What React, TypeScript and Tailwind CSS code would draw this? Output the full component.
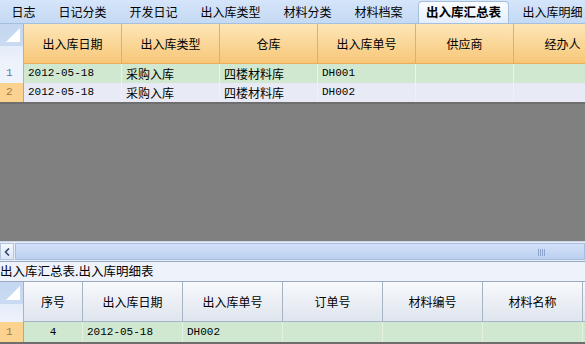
import React from 'react';

const cjk = "font-['Noto_Sans_CJK_SC',sans-serif]";
const mono = "font-['Liberation_Mono','Noto_Sans_CJK_SC',monospace]";

const tabs = ['日志', '日记分类', '开发日记', '出入库类型', '材料分类', '材料档案', '出入库汇总表', '出入库明细'];

const topCols = ['出入库日期', '出入库类型', '仓库', '出入库单号', '供应商', '经办人'];
const topRows = [
  { n: '1', cells: ['2012-05-18', '采购入库', '四楼材料库', 'DH001', '', ''], selected: false },
  { n: '2', cells: ['2012-05-18', '采购入库', '四楼材料库', 'DH002', '', ''], selected: true },
];

const bottomCols = [
  { t: '序号', w: 'w-[59px]' },
  { t: '出入库日期', w: 'w-[100px]' },
  { t: '出入库单号', w: 'w-[100px]' },
  { t: '订单号', w: 'w-[100px]' },
  { t: '材料编号', w: 'w-[100px]' },
  { t: '材料名称', w: 'w-[100px]' },
  { t: '', w: 'w-[40px]' },
];

const Corner = ({ h }: { h: string }) => (
  <div className={`relative w-[24px] shrink-0 ${h} bg-gradient-to-b from-[#d6e4f7] to-[#eef3fb] border-r border-[#9eb6ce]`}>
    <div className="absolute top-0 left-0 right-0 h-[22px] bg-[#b9cfec]/60" />
    <div className="absolute top-[4px] right-[3px] w-0 h-0 border-l-[14px] border-l-transparent border-b-[14px] border-b-[#ffffff]" />
  </div>
);

const isAscii = (s: string) => /^[\x00-\x7f]*$/.test(s);

export default function App() {
  return (
    <div className={`w-[585px] h-[344px] overflow-hidden bg-[#808080] flex flex-col text-[12px] text-black ${cjk}`}>
      {/* tab strip */}
      <div className="h-[24px] shrink-0 flex items-end bg-gradient-to-b from-[#d5e5fa] to-[#c4d9f3] border-b border-[#a6bfdc] overflow-hidden">
        {tabs.map((t) =>
          t === '出入库汇总表' ? (
            <div key={t} className="h-[22px] px-[7px] ml-[4px] mr-[2px] flex items-center rounded-t-[4px] bg-gradient-to-b from-[#fbfdff] to-[#e4eefb] border border-b-0 border-[#a6bfdc] font-bold text-[12.5px] whitespace-nowrap shrink-0">
              {t}
            </div>
          ) : (
            <div key={t} className="h-[22px] px-[11.5px] flex items-center text-[12px] whitespace-nowrap shrink-0">
              {t}
            </div>
          )
        )}
      </div>

      {/* master grid */}
      <div className="flex shrink-0">
        <Corner h="h-[40px]" />
        {topCols.map((c) => (
          <div key={c} className="w-[98px] shrink-0 h-[40px] flex items-center justify-center bg-gradient-to-b from-[#fde6b8] to-[#f7c777] border-r border-[#e9ad5c] border-b border-[#d9a352]">
            {c}
          </div>
        ))}
      </div>
      {topRows.map((r) => (
        <div key={r.n} className="flex shrink-0 h-[19px]">
          <div className={`w-[24px] shrink-0 pl-[6px] text-[11px] leading-[19px] border-r ${r.selected ? 'bg-[#fbd28f] text-[#9a7a48] border-[#d9a352]' : 'bg-[#eef3fb] text-[#5a7aa8] border-[#9eb6ce]'} ${mono}`}>
            {r.n}
          </div>
          {r.cells.map((c, i) => (
            <div key={i} className={`w-[98px] shrink-0 pl-[4px] leading-[19px] border-r border-[#eef2f8] whitespace-nowrap ${r.selected ? 'bg-[#e8ebf5]' : 'bg-[#d0e8cf]'} ${isAscii(c) ? `${mono} text-[11px]` : ''}`}>
              {c}
            </div>
          ))}
        </div>
      ))}
      <div className="h-[2px] shrink-0 bg-[#6e6e6e]" />
      <div className="flex-1" />

      {/* horizontal scrollbar */}
      <div className="h-[20px] shrink-0 flex items-stretch bg-[#e8eef8] border-t border-[#c8d6e8] py-[1px]">
        <div className="w-[14px] shrink-0 flex items-center justify-center bg-gradient-to-b from-[#f4f8fe] to-[#dbe6f6] border border-[#b4c6de]">
          <svg width="6" height="8" viewBox="0 0 6 8">
            <path d="M5 0.5 L1.5 4 L5 7.5" stroke="#34476e" strokeWidth="1.6" fill="none" />
          </svg>
        </div>
        <div className="flex-1 ml-[1px] relative bg-gradient-to-b from-[#d3e1f8] to-[#bcd0f2] border border-[#a8bee0]">
          <div className="absolute top-[5px] left-[522px] flex gap-[1px]">
            <span className="w-[1px] h-[7px] bg-[#8fa6cc]" />
            <span className="w-[1px] h-[7px] bg-[#8fa6cc]" />
            <span className="w-[1px] h-[7px] bg-[#8fa6cc]" />
            <span className="w-[1px] h-[7px] bg-[#8fa6cc]" />
          </div>
        </div>
      </div>

      {/* detail caption */}
      <div className="h-[21px] shrink-0 flex items-center bg-[#eef2fb] border-t border-[#9aa9bd] border-b border-[#9aa9bd] text-[12.5px] whitespace-nowrap">
        出入库汇总表.出入库明细表
      </div>

      {/* detail grid */}
      <div className="flex shrink-0">
        <Corner h="h-[40px]" />
        {bottomCols.map((c, i) => (
          <div key={i} className={`${c.w} shrink-0 h-[40px] flex items-center justify-center bg-gradient-to-b from-[#f7f9fc] to-[#dfe5ee] border-r border-[#a5b3c4] border-b border-[#9aa9bd]`}>
            {c.t}
          </div>
        ))}
      </div>
      <div className="flex shrink-0 h-[20px]">
        <div className={`w-[24px] shrink-0 pl-[6px] text-[11px] leading-[20px] bg-[#fbd28f] text-[#9a7a48] border-r border-[#d9a352] ${mono}`}>
          1
        </div>
        <div className={`w-[59px] shrink-0 text-center leading-[20px] bg-[#d0e8cf] border-r border-[#e3f0e2] text-[11px] ${mono}`}>4</div>
        <div className={`w-[100px] shrink-0 pl-[4px] leading-[20px] bg-[#d0e8cf] border-r border-[#e3f0e2] text-[11px] ${mono}`}>2012-05-18</div>
        <div className={`w-[100px] shrink-0 pl-[4px] leading-[20px] bg-[#d0e8cf] border-r border-[#e3f0e2] text-[11px] ${mono}`}>DH002</div>
        <div className="w-[100px] shrink-0 bg-[#d0e8cf] border-r border-[#e3f0e2]" />
        <div className="w-[100px] shrink-0 bg-[#d0e8cf] border-r border-[#e3f0e2]" />
        <div className="w-[100px] shrink-0 bg-[#d0e8cf] border-r border-[#e3f0e2]" />
        <div className="w-[40px] shrink-0 bg-[#d0e8cf]" />
      </div>
      <div className="h-[2px] shrink-0 bg-[#6e6e6e]" />
    </div>
  );
}
